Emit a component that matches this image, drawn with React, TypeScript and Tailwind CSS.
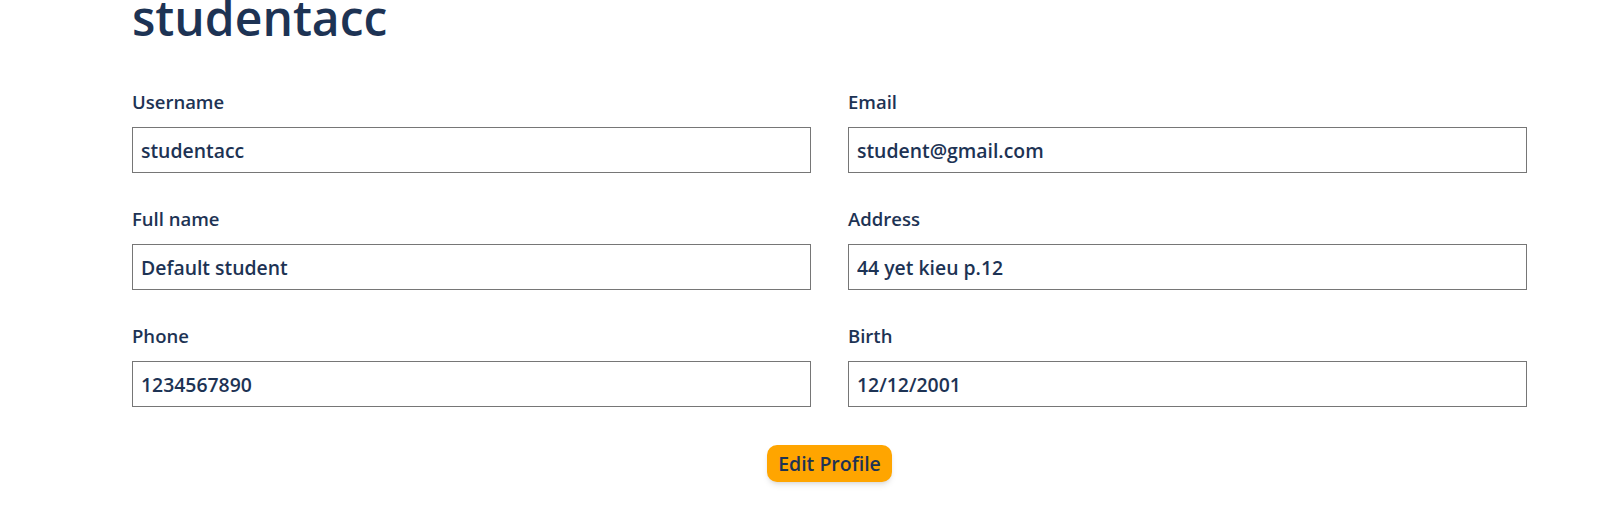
import React from "react";

const fields: [string, string][] = [
  ["Username", "studentacc"],
  ["Email", "student@gmail.com"],
  ["Full name", "Default student"],
  ["Address", "44 yet kieu p.12"],
  ["Phone", "1234567890"],
  ["Birth", "12/12/2001"],
];

export default function App() {
  return (
    <div
      className="w-[1604px] h-[516px] overflow-hidden bg-white text-[#1d3354]"
      style={{ fontFamily: '"Open Sans", "Noto Sans", sans-serif' }}
    >
      <div className="ml-[132px] w-[1395px]">
        <h1 className="text-[48px] leading-[48px] font-semibold mt-[-6px] h-[48px]">studentacc</h1>
        <div className="grid grid-cols-2 gap-x-[37px] gap-y-[34px] mt-[48px]">
          {fields.map(([label, value]) => (
            <div key={label} className="flex flex-col">
              <label className="text-[18.5px] leading-[24px] font-semibold h-[24px]">{label}</label>
              <input
                readOnly
                value={value}
                className="mt-[13px] h-[46px] border border-[#767676] px-[8px] text-[19.4px] font-semibold text-[#1d3354] outline-none"
                style={{ fontFamily: '"Open Sans", "Noto Sans", sans-serif' }}
              />
            </div>
          ))}
        </div>
        <div className="flex justify-center mt-[38px]">
          <button className="h-[37px] w-[125px] rounded-[10px] bg-[#ffa500] text-[19.5px] font-semibold text-[#1d3354] shadow-md">
            Edit Profile
          </button>
        </div>
      </div>
    </div>
  );
}
